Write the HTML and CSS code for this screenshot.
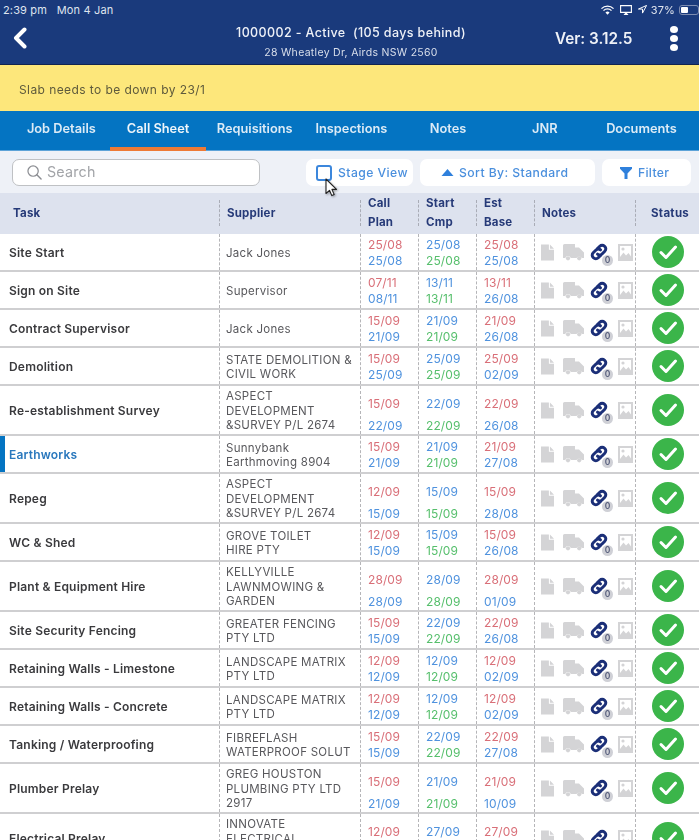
FILE: index.html
```html
<!DOCTYPE html>
<html lang="en">
<head>
<meta charset="utf-8">
<title>Call Sheet</title>
<link rel="stylesheet" href="styles.css">
</head>
<body>
<svg class="defs" width="0" height="0" aria-hidden="true">
  <symbol id="i-doc" viewBox="0 0 14 17"><path d="M0 0h8.500v5.500H14V17H0zM9.600 0L14 4.400h-4.400z" fill="#d4d4d6"/></symbol>
  <symbol id="i-truck" viewBox="0 0 21 17"><path d="M0 1.500A1.500 1.500 0 0 1 1.500 0H12V3.500H16L21 8.500V14H18.800A3 3 0 0 0 13.500 14H7.800A3 3 0 0 0 2.200 14H0z" fill="#d4d4d6"/><circle cx="5" cy="14.300" r="2.100" fill="#d4d4d6"/><circle cx="16.200" cy="14.300" r="2.100" fill="#d4d4d6"/></symbol>
  <symbol id="i-link" viewBox="0 0 18 18"><g fill="none" stroke="#1b2f78" stroke-width="3" stroke-linecap="round"><path d="M7.500 5.500L9.800 3.200a3.300 3.300 0 0 1 4.700 0l.3.300a3.300 3.300 0 0 1 0 4.700L12 11a3.300 3.300 0 0 1-4.500.2"/><path d="M10.500 12.500L8.200 14.800a3.300 3.300 0 0 1-4.700 0l-.3-.3a3.300 3.300 0 0 1 0-4.700L6 7a3.300 3.300 0 0 1 4.500-.2"/></g></symbol>
  <symbol id="i-img" viewBox="0 0 15 17"><path fill-rule="evenodd" d="M0 0h15v17H0zM2 2v11l3.500-4.500 2.500 3 2.500-2.500 2.500 3.500V2z" fill="#d4d4d6"/><circle cx="5" cy="5" r="1.600" fill="#d4d4d6"/></symbol>
  <symbol id="i-check" viewBox="0 0 32 32"><circle cx="16" cy="16" r="16" fill="#3bb54a"/><path d="M9 16.500l5 5L23.500 11" fill="none" stroke="#fff" stroke-width="3" stroke-linecap="round" stroke-linejoin="round"/></symbol>
</svg>

<div class="page">
<header class="appbar">
  <div class="status">
    <span>2:39 pm&nbsp;&nbsp; Mon 4 Jan</span>
    <span class="status-right">
      <svg class="st-wifi" viewBox="0 0 14 10"><path d="M0.500 3.500a9 9 0 0 1 13 0M2.700 5.700a6 6 0 0 1 8.600 0" fill="none" stroke="#fff" stroke-width="1.400"/><path d="M4.800 7.600a3.100 3.100 0 0 1 4.400 0L7 10z" fill="#fff"/></svg>
      <svg class="st-air" viewBox="0 0 12 10"><path d="M.6.600h10.800v6.800H.6z" fill="none" stroke="#fff" stroke-width="1.100"/><path d="M3.500 10L6 7l2.500 3z" fill="#fff"/></svg>
      <svg class="st-loc" viewBox="0 0 10 10"><path d="M9.500.5L.5 4.500h4.500v4.500z" fill="none" stroke="#fff" stroke-width="1.100" stroke-linejoin="round"/></svg>
      <span>37%</span>
      <span class="battery"><span class="battery-fill"></span></span>
    </span>
  </div>
  <div class="appbar-main">
    <svg class="back" viewBox="0 0 14 22"><path d="M11.500 2.500L3 11l8.500 8.500" fill="none" stroke="#fff" stroke-width="4" stroke-linecap="round" stroke-linejoin="round"/></svg>
    <div class="job">
      <div class="job-title">1000002 - Active&nbsp; (105 days behind)</div>
      <div class="job-address">28 Wheatley Dr, Airds NSW 2560</div>
    </div>
    <div class="version">Ver: 3.12.5</div>
    <div class="dots"><i></i><i></i><i></i></div>
  </div>
</header>

<div class="notice">Slab needs to be down by 23/1</div>

<nav class="tabs">
  <a>Job Details</a>
  <a class="active">Call Sheet</a>
  <a>Requisitions</a>
  <a>Inspections</a>
  <a>Notes</a>
  <a>JNR</a>
  <a>Documents</a>
</nav>

<div class="toolbar">
  <label class="search">
    <svg class="search-icon" viewBox="0 0 16 16"><circle cx="6.500" cy="6.500" r="5.500" fill="none" stroke="#8b8d92" stroke-width="1.300"/><path d="M10.500 10.500L15 15" stroke="#8b8d92" stroke-width="1.500" stroke-linecap="round"/></svg>
    <span>Search</span>
  </label>
  <button class="tool stage"><span class="checkbox"></span>Stage View</button>
  <button class="tool sort"><svg class="sort-icon" viewBox="0 0 12 7"><path d="M6 0l6 7H0z" fill="#2f80dc"/></svg>Sort By: Standard</button>
  <button class="tool filter"><svg class="filter-icon" viewBox="0 0 12 12"><path d="M0 0h12v1.800L7.500 6.500V12h-3V6.500L0 1.800z" fill="#2f80dc"/></svg>Filter</button>
  <svg class="cursor" viewBox="0 0 13 19"><path d="M1 1v14.500l3.500-3.200 2.300 5.300 2.400-1-2.300-5.200H11.500z" fill="#fff" stroke="#222" stroke-width="1.100" stroke-linejoin="round"/></svg>
</div>

<div class="grid head">
  <div class="hc first">Task</div>
  <div class="hc">Supplier</div>
  <div class="hc two"><span>Call<br>Plan</span></div>
  <div class="hc two"><span>Start<br>Cmp</span></div>
  <div class="hc two"><span>Est<br>Base</span></div>
  <div class="hc">Notes</div>
  <div class="hc status-h">Status</div>
</div>

<main class="rows">
  <div class="grid row"><div class="c task">Site Start</div><div class="c sup">Jack Jones</div><div class="c d"><b class="r">25/08</b><b class="b">25/08</b></div><div class="c d"><b class="b">25/08</b><b class="g">25/08</b></div><div class="c d"><b class="r">25/08</b><b class="b">25/08</b></div><div class="c n"><svg class="doc"><use href="#i-doc"/></svg><svg class="truck"><use href="#i-truck"/></svg><span class="lnk"><svg class="link"><use href="#i-link"/></svg><em>0</em></span><svg class="img"><use href="#i-img"/></svg></div><div class="c st"><svg class="check"><use href="#i-check"/></svg></div></div>
  <div class="grid row"><div class="c task">Sign on Site</div><div class="c sup">Supervisor</div><div class="c d"><b class="r">07/11</b><b class="b">08/11</b></div><div class="c d"><b class="b">13/11</b><b class="g">13/11</b></div><div class="c d"><b class="r">13/11</b><b class="b">26/08</b></div><div class="c n"><svg class="doc"><use href="#i-doc"/></svg><svg class="truck"><use href="#i-truck"/></svg><span class="lnk"><svg class="link"><use href="#i-link"/></svg><em>0</em></span><svg class="img"><use href="#i-img"/></svg></div><div class="c st"><svg class="check"><use href="#i-check"/></svg></div></div>
  <div class="grid row"><div class="c task">Contract Supervisor</div><div class="c sup">Jack Jones</div><div class="c d"><b class="r">15/09</b><b class="b">21/09</b></div><div class="c d"><b class="b">21/09</b><b class="g">21/09</b></div><div class="c d"><b class="r">21/09</b><b class="b">26/08</b></div><div class="c n"><svg class="doc"><use href="#i-doc"/></svg><svg class="truck"><use href="#i-truck"/></svg><span class="lnk"><svg class="link"><use href="#i-link"/></svg><em>0</em></span><svg class="img"><use href="#i-img"/></svg></div><div class="c st"><svg class="check"><use href="#i-check"/></svg></div></div>
  <div class="grid row"><div class="c task">Demolition</div><div class="c sup">STATE DEMOLITION &amp;<br>CIVIL WORK</div><div class="c d"><b class="r">15/09</b><b class="b">25/09</b></div><div class="c d"><b class="b">25/09</b><b class="g">25/09</b></div><div class="c d"><b class="r">25/09</b><b class="b">02/09</b></div><div class="c n"><svg class="doc"><use href="#i-doc"/></svg><svg class="truck"><use href="#i-truck"/></svg><span class="lnk"><svg class="link"><use href="#i-link"/></svg><em>0</em></span><svg class="img"><use href="#i-img"/></svg></div><div class="c st"><svg class="check"><use href="#i-check"/></svg></div></div>
  <div class="grid row tall"><div class="c task">Re-establishment Survey</div><div class="c sup">ASPECT<br>DEVELOPMENT<br>&amp;SURVEY P/L 2674</div><div class="c d"><b class="r">15/09</b><b class="b">22/09</b></div><div class="c d"><b class="b">22/09</b><b class="g">22/09</b></div><div class="c d"><b class="r">22/09</b><b class="b">26/08</b></div><div class="c n"><svg class="doc"><use href="#i-doc"/></svg><svg class="truck"><use href="#i-truck"/></svg><span class="lnk"><svg class="link"><use href="#i-link"/></svg><em>0</em></span><svg class="img"><use href="#i-img"/></svg></div><div class="c st"><svg class="check"><use href="#i-check"/></svg></div></div>
  <div class="grid row current"><div class="c task">Earthworks</div><div class="c sup">Sunnybank<br>Earthmoving 8904</div><div class="c d"><b class="r">15/09</b><b class="b">21/09</b></div><div class="c d"><b class="b">21/09</b><b class="g">21/09</b></div><div class="c d"><b class="r">21/09</b><b class="b">27/08</b></div><div class="c n"><svg class="doc"><use href="#i-doc"/></svg><svg class="truck"><use href="#i-truck"/></svg><span class="lnk"><svg class="link"><use href="#i-link"/></svg><em>0</em></span><svg class="img"><use href="#i-img"/></svg></div><div class="c st"><svg class="check"><use href="#i-check"/></svg></div></div>
  <div class="grid row tall"><div class="c task">Repeg</div><div class="c sup">ASPECT<br>DEVELOPMENT<br>&amp;SURVEY P/L 2674</div><div class="c d"><b class="r">12/09</b><b class="b">15/09</b></div><div class="c d"><b class="b">15/09</b><b class="g">15/09</b></div><div class="c d"><b class="r">15/09</b><b class="b">28/08</b></div><div class="c n"><svg class="doc"><use href="#i-doc"/></svg><svg class="truck"><use href="#i-truck"/></svg><span class="lnk"><svg class="link"><use href="#i-link"/></svg><em>0</em></span><svg class="img"><use href="#i-img"/></svg></div><div class="c st"><svg class="check"><use href="#i-check"/></svg></div></div>
  <div class="grid row"><div class="c task">WC &amp; Shed</div><div class="c sup">GROVE TOILET<br>HIRE PTY</div><div class="c d"><b class="r">12/09</b><b class="b">15/09</b></div><div class="c d"><b class="b">15/09</b><b class="g">15/09</b></div><div class="c d"><b class="r">15/09</b><b class="b">26/08</b></div><div class="c n"><svg class="doc"><use href="#i-doc"/></svg><svg class="truck"><use href="#i-truck"/></svg><span class="lnk"><svg class="link"><use href="#i-link"/></svg><em>0</em></span><svg class="img"><use href="#i-img"/></svg></div><div class="c st"><svg class="check"><use href="#i-check"/></svg></div></div>
  <div class="grid row tall"><div class="c task">Plant &amp; Equipment Hire</div><div class="c sup">KELLYVILLE<br>LAWNMOWING &amp;<br>GARDEN</div><div class="c d"><b class="r">28/09</b><b class="b">28/09</b></div><div class="c d"><b class="b">28/09</b><b class="g">28/09</b></div><div class="c d"><b class="r">28/09</b><b class="b">01/09</b></div><div class="c n"><svg class="doc"><use href="#i-doc"/></svg><svg class="truck"><use href="#i-truck"/></svg><span class="lnk"><svg class="link"><use href="#i-link"/></svg><em>0</em></span><svg class="img"><use href="#i-img"/></svg></div><div class="c st"><svg class="check"><use href="#i-check"/></svg></div></div>
  <div class="grid row"><div class="c task">Site Security Fencing</div><div class="c sup">GREATER FENCING<br>PTY LTD</div><div class="c d"><b class="r">15/09</b><b class="b">15/09</b></div><div class="c d"><b class="b">22/09</b><b class="g">22/09</b></div><div class="c d"><b class="r">22/09</b><b class="b">26/08</b></div><div class="c n"><svg class="doc"><use href="#i-doc"/></svg><svg class="truck"><use href="#i-truck"/></svg><span class="lnk"><svg class="link"><use href="#i-link"/></svg><em>0</em></span><svg class="img"><use href="#i-img"/></svg></div><div class="c st"><svg class="check"><use href="#i-check"/></svg></div></div>
  <div class="grid row"><div class="c task">Retaining Walls - Limestone</div><div class="c sup">LANDSCAPE MATRIX<br>PTY LTD</div><div class="c d"><b class="r">12/09</b><b class="b">12/09</b></div><div class="c d"><b class="b">12/09</b><b class="g">12/09</b></div><div class="c d"><b class="r">12/09</b><b class="b">02/09</b></div><div class="c n"><svg class="doc"><use href="#i-doc"/></svg><svg class="truck"><use href="#i-truck"/></svg><span class="lnk"><svg class="link"><use href="#i-link"/></svg><em>0</em></span><svg class="img"><use href="#i-img"/></svg></div><div class="c st"><svg class="check"><use href="#i-check"/></svg></div></div>
  <div class="grid row"><div class="c task">Retaining Walls - Concrete</div><div class="c sup">LANDSCAPE MATRIX<br>PTY LTD</div><div class="c d"><b class="r">12/09</b><b class="b">12/09</b></div><div class="c d"><b class="b">12/09</b><b class="g">12/09</b></div><div class="c d"><b class="r">12/09</b><b class="b">02/09</b></div><div class="c n"><svg class="doc"><use href="#i-doc"/></svg><svg class="truck"><use href="#i-truck"/></svg><span class="lnk"><svg class="link"><use href="#i-link"/></svg><em>0</em></span><svg class="img"><use href="#i-img"/></svg></div><div class="c st"><svg class="check"><use href="#i-check"/></svg></div></div>
  <div class="grid row"><div class="c task">Tanking / Waterproofing</div><div class="c sup">FIBREFLASH<br>WATERPROOF SOLUT</div><div class="c d"><b class="r">15/09</b><b class="b">15/09</b></div><div class="c d"><b class="b">22/09</b><b class="g">22/09</b></div><div class="c d"><b class="r">22/09</b><b class="b">27/08</b></div><div class="c n"><svg class="doc"><use href="#i-doc"/></svg><svg class="truck"><use href="#i-truck"/></svg><span class="lnk"><svg class="link"><use href="#i-link"/></svg><em>0</em></span><svg class="img"><use href="#i-img"/></svg></div><div class="c st"><svg class="check"><use href="#i-check"/></svg></div></div>
  <div class="grid row tall"><div class="c task">Plumber Prelay</div><div class="c sup">GREG HOUSTON<br>PLUMBING PTY LTD<br>2917</div><div class="c d"><b class="r">15/09</b><b class="b">21/09</b></div><div class="c d"><b class="b">21/09</b><b class="g">21/09</b></div><div class="c d"><b class="r">21/09</b><b class="b">10/09</b></div><div class="c n"><svg class="doc"><use href="#i-doc"/></svg><svg class="truck"><use href="#i-truck"/></svg><span class="lnk"><svg class="link"><use href="#i-link"/></svg><em>0</em></span><svg class="img"><use href="#i-img"/></svg></div><div class="c st"><svg class="check"><use href="#i-check"/></svg></div></div>
  <div class="grid row tall"><div class="c task">Electrical Prelay</div><div class="c sup">INNOVATE<br>ELECTRICAL<br>&nbsp;</div><div class="c d"><b class="r">12/09</b><b class="b">&nbsp;</b></div><div class="c d"><b class="b">27/09</b><b class="g">&nbsp;</b></div><div class="c d"><b class="r">27/09</b><b class="b">&nbsp;</b></div><div class="c n"><svg class="doc"><use href="#i-doc"/></svg><svg class="truck"><use href="#i-truck"/></svg><span class="lnk"><svg class="link"><use href="#i-link"/></svg><em>0</em></span><svg class="img"><use href="#i-img"/></svg></div><div class="c st"><svg class="check"><use href="#i-check"/></svg></div></div>
</main>
</div>
</body>
</html>
```
FILE: styles.css
```css
* { box-sizing: border-box; }
html, body { margin: 0; height: 840px; overflow: hidden; }
body { font-family: Inter, "Liberation Sans", sans-serif; background: #fff; color: #333; width: 699px; }
.defs { position: absolute; }
.page { filter: blur(.35px); }

.appbar { height: 65px; background: #1a3a7c; color: #fff; border-bottom: 1px solid #12244f; }
.status { height: 19px; display: flex; justify-content: space-between; align-items: center; font-size: 11px; padding: 0 0 0 3px; color: #dfe4ee; letter-spacing: .15px; }
.status-right { display: flex; align-items: center; gap: 4px; }
.st-wifi { width: 13px; height: 10px; }
.st-air { width: 12px; height: 10px; margin-left: 2px; }
.st-loc { width: 9px; height: 9px; margin-left: 2px; }
.battery { width: 20px; height: 10px; border: 1px solid #7d8cb0; border-radius: 3px; display: block; padding: 1px; }
.battery-fill { display: block; width: 7px; height: 100%; background: #fff; border-radius: 1px; }
.appbar-main { height: 45px; display: flex; align-items: flex-start; position: relative; }
.back { width: 14px; height: 22px; margin: 8px 0 0 13px; }
.job { position: absolute; left: 186px; width: 330px; text-align: center; }
.job-title { font-size: 12.5px; font-weight: 500; line-height: 16px; margin-top: 6px; letter-spacing: .38px; color: #eef1f7; }
.job-address { font-size: 10.5px; line-height: 14px; margin-top: 5px; letter-spacing: .3px; color: #d9dfeb; }
.version { position: absolute; left: 555px; top: 11px; font-size: 15.3px; font-weight: 600; line-height: 18px; color: #eef1f7; }
.dots { position: absolute; left: 670px; top: 7px; display: flex; flex-direction: column; gap: 2px; }
.dots i { width: 8px; height: 7px; background: #fff; border-radius: 50%; display: block; }

.notice { height: 46px; background: #fde77b; font-size: 12px; color: #5e5a3c; display: flex; align-items: center; padding: 3px 0 0 19px; letter-spacing: .42px; }

.tabs { height: 40px; background: #0474c2; display: flex; padding-left: 13px; border-bottom: 1px solid #5da3d8; }
.tabs a { width: 96.7px; text-align: center; font-size: 12.8px; font-weight: 600; line-height: 36px; color: #dcebf6; border-bottom: 4px solid transparent; height: 40px; }
.tabs a.active { border-bottom-color: #ee7a35; color: #eef5fa; }

.toolbar { height: 42px; background: #eef1f7; position: relative; display: flex; align-items: flex-start; padding-top: 8px; }
.search { width: 248px; height: 27px; margin-left: 12px; background: #fff; border: 1px solid #bfc1c4; border-radius: 7px; display: flex; align-items: center; padding: 0 0 2px 14px; gap: 5px; font-size: 14.3px; color: #a2a4a8; letter-spacing: .2px; }
.search-icon { width: 15px; height: 15px; margin-top: 2px; }
.tool { height: 27px; background: #fff; border: 0; border-radius: 7px; font-family: inherit; font-size: 12.2px; font-weight: 500; color: #4a8fdd; display: flex; align-items: center; justify-content: center; letter-spacing: .42px; padding: 0; }
.stage { width: 107px; margin-left: 46px; gap: 6px; justify-content: flex-start; padding-left: 10px; }
.checkbox { width: 16px; height: 16px; border: 2px solid #3c87dc; border-radius: 3px; display: block; }
.sort { width: 175px; margin-left: 7px; gap: 5px; justify-content: flex-start; padding-left: 21px; }
.sort-icon { width: 13px; height: 7px; }
.filter { width: 89px; margin-left: 7px; gap: 6px; justify-content: flex-start; padding-left: 18px; letter-spacing: .3px; }
.filter-icon { width: 12px; height: 12px; }
.cursor { position: absolute; left: 325px; top: 27px; width: 13px; height: 19px; filter: drop-shadow(1px 1px 1px rgba(0,0,0,.35)); }

.grid { display: grid; grid-template-columns: 219px 141px 58px 58px 58px 101px 64px; }
.head { height: 41px; grid-template-rows: 41px; background: #dde2ee; }
.hc { font-size: 11.5px; font-weight: 700; color: #263a78; display: flex; align-items: center; padding-left: 7px; border-left: 1px dashed #a9acb6; margin: 7px 0 8px; letter-spacing: .2px; }
.hc.first { border-left: 0; padding-left: 13px; }
.hc.two { line-height: 19px; }
.hc.status-h { padding-left: 15px; letter-spacing: .3px; }

.row { height: 38px; border-bottom: 2px solid #cfcfd1; background: #fff; }
.row.tall { height: 50px; }
.c { border-left: 1px dashed #b5b5b8; display: flex; align-items: center; min-width: 0; }
.task { border-left: 0; padding: 0 0 0 9px; font-size: 12px; font-weight: 600; color: #3a3a3d; letter-spacing: .2px; }
.current .task { color: #2a78bd; box-shadow: inset 5px 0 0 #0474c2; }
.sup { padding: 2px 0 0 6px; font-size: 11.5px; line-height: 14.5px; color: #58585c; letter-spacing: .27px; }
.d { flex-direction: column; justify-content: center; align-items: flex-start; padding: 2px 0 0 7px; }
.d b { font-weight: 400; font-size: 12px; line-height: 16px; letter-spacing: .1px; display: block; }
.tall .d { padding-top: 10px; gap: 6px; }
.r { color: #d96f78; }
.b { color: #4f92de; }
.g { color: #56bf6c; }
.n { padding-left: 6px; position: relative; }
.doc { width: 13px; height: 17px; }
.truck { width: 21px; height: 17px; margin-left: 9px; }
.lnk { position: relative; width: 24px; height: 24px; margin-left: 5px; }
.link { width: 18px; height: 18px; position: absolute; left: 1px; top: 3px; }
.lnk em { position: absolute; left: 13px; top: 15px; width: 11px; height: 11px; border-radius: 50%; background: #cfd0d6; font-style: normal; font-size: 8.5px; line-height: 11px; text-align: center; color: #555c7a; font-weight: 600; }
.img { width: 15px; height: 17px; margin-left: 5px; }
.st { justify-content: center; }
.check { width: 32px; height: 32px; }
```
